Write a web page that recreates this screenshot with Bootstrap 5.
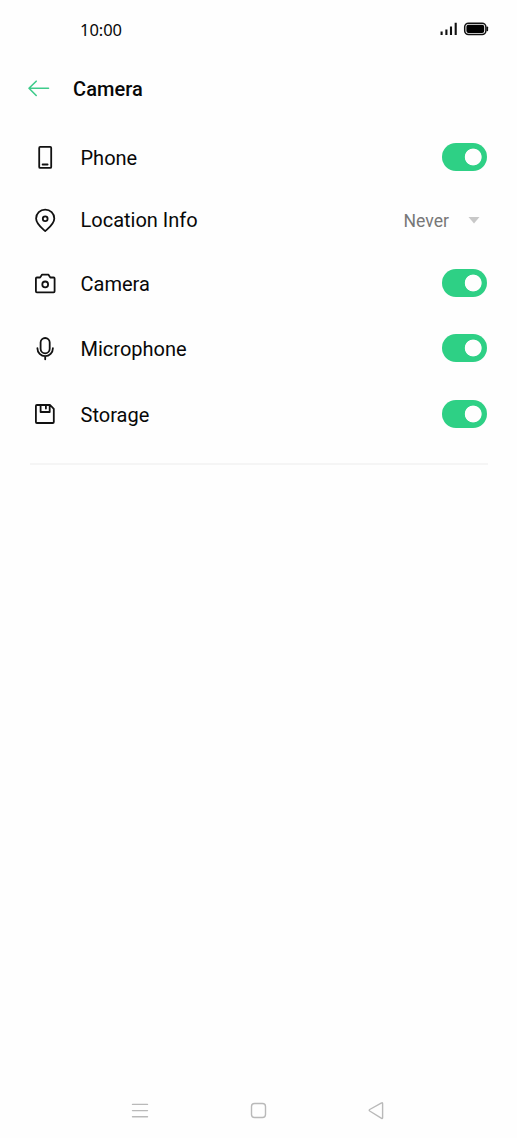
<!DOCTYPE html>
<html lang="en">
<head>
<meta charset="utf-8">
<meta name="viewport" content="width=device-width, initial-scale=1">
<title>Camera</title>
<link rel="stylesheet" href="https://cdn.jsdelivr.net/npm/bootstrap@5.3.0/dist/css/bootstrap.min.css">
<style>
body{font-family:Roboto,sans-serif;color:#080808;background:#fefefe}
svg{display:block;flex:none;fill:none;stroke-linecap:round;stroke-linejoin:round}
.status{height:58px;padding:0 28px 0 80px}
.clock{font-family:"Noto Sans",sans-serif;font-size:16.5px;line-height:20px;letter-spacing:-.05px;padding-top:1px}
.topbar{height:62px;padding:0 27px}
.topbar h1{font-size:20px;line-height:24px;font-weight:500;letter-spacing:.08px;margin:0 0 0 23px}
.perms{padding-top:6px}
.perm{padding:0 30px;font-size:20px;line-height:24px;height:62px}
.perm svg{stroke:#111;stroke-width:1.8}
.perm .label{margin-left:20.5px;padding-top:2px}
.perm .place{padding-top:0}
.h64{height:64px}.h68{height:68px}
.perm .form-check-input{width:45.5px;height:28px;margin:0;border:0;border-radius:14px;background:#2ed085 radial-gradient(circle at 31.2px 14px,#fefefe 8px,#2ed085 8.8px)}
.never{font-size:17.6px;color:#777;padding-top:2px}
.perm .caret{stroke:none;fill:#c8c8c8;margin:0 7px 0 19px}
.rule{height:2px;margin:17px 29px 0 30px;background:#f5f5f5}
.sysnav{height:54px;padding:0 131px}
.sysnav svg{stroke:#b9b9b9;stroke-width:1.4}
</style>
</head>
<body>
<div class="d-flex flex-column vh-100">
  <div class="status d-flex align-items-center justify-content-between">
    <span class="clock">10:00</span>
    <svg width="49" height="16" viewBox="0 0 49 16"><path d="M1.6 14v-3.6M6.4 14V8.600M11 14V5.500M15.700 14V1.800" stroke="#111" stroke-width="2.100" stroke-linecap="butt"/><rect x="24.7" y="2.2" width="21.200" height="11.400" rx="3.800" stroke="#111" stroke-width="1.5"/><rect x="26.400" y="3.800" width="17.800" height="8.200" rx="2" fill="#000"/><path d="M47.300 6.200v3.200" stroke="#111" stroke-width="1.600"/></svg>
  </div>
  <header class="topbar d-flex align-items-center">
    <svg width="23" height="20" viewBox="0 0 23 20" stroke="#3ecb8b" stroke-width="1.6"><path d="M21.5 9.3H2.3M9.2 2.2L2 9.3l7.2 7.2"/></svg>
    <h1>Camera</h1>
  </header>
  <main class="perms">
    <div class="perm d-flex align-items-center">
      <svg width="30" height="30"><rect x="9.2" y="4.9" width="12" height="21" rx="1"/><path d="M12.6 22.500h5"/></svg>
      <label class="label" for="s1">Phone</label>
      <input class="form-check-input ms-auto" type="checkbox" role="switch" id="s1" checked>
    </div>
    <div class="perm h64 d-flex align-items-center">
      <svg width="30" height="30"><path d="M15.2 26.1C12 23.300 6.100 19 6.100 13.500a9.100 8.900 0 0 1 18.200 0c0 5.500-5.900 9.800-9.100 12.600z"/><circle cx="15.200" cy="13.800" r="2.400"/></svg>
      <span class="label place">Location Info</span>
      <span class="never ms-auto">Never</span>
      <svg class="caret" width="12" height="8"><path d="M.5.900h11L6 7.500z"/></svg>
    </div>
    <div class="perm d-flex align-items-center">
      <svg width="30" height="30"><path d="M6.900 9.500h3.200l2-2.900h6.200l2 2.900h3.300q1 0 1 1v12.800q0 1-1 1H6.900q-1 0-1-1V10.500q0-1 1-1z"/><circle cx="15.200" cy="16.400" r="2.900"/></svg>
      <label class="label" for="s2">Camera</label>
      <input class="form-check-input ms-auto" type="checkbox" role="switch" id="s2" checked>
    </div>
    <div class="perm h68 d-flex align-items-center">
      <svg width="30" height="30"><rect x="10.600" y="5" width="9.100" height="15.300" rx="4.550"/><path d="M7.400 15.200a7.750 8 0 0 0 15.500 0M15.200 23.300v3"/></svg>
      <label class="label" for="s3">Microphone</label>
      <input class="form-check-input ms-auto" type="checkbox" role="switch" id="s3" checked>
    </div>
    <div class="perm h64 d-flex align-items-center">
      <svg width="30" height="30"><path d="M6.900 6h13.200l3.700 3.900V23q0 1-1 1H6.900q-1 0-1-1V7q0-1 1-1zM10.600 6.200v6.800h9.100V6.200M15.900 6.200v3.400"/></svg>
      <label class="label" for="s4">Storage</label>
      <input class="form-check-input ms-auto" type="checkbox" role="switch" id="s4" checked>
    </div>
    <div class="rule"></div>
  </main>
  <nav class="sysnav mt-auto d-flex align-items-center justify-content-between">
    <svg width="18" height="18"><path d="M1.500 2.400h15M1.500 8.600h15M1.500 14.800h15"/></svg>
    <svg width="18" height="18"><rect x="1.500" y="1.500" width="14" height="14" rx="3"/></svg>
    <svg width="18" height="18"><path d="M1.400 7.900q-.4.6.3 1.100l11.900 7.300q1 .5 1-.6V1.500q0-1.200-1-.6L1.700 7.500z"/></svg>
  </nav>
</div>
<script src="https://cdn.jsdelivr.net/npm/bootstrap@5.3.0/dist/js/bootstrap.bundle.min.js"></script>
</body>
</html>
